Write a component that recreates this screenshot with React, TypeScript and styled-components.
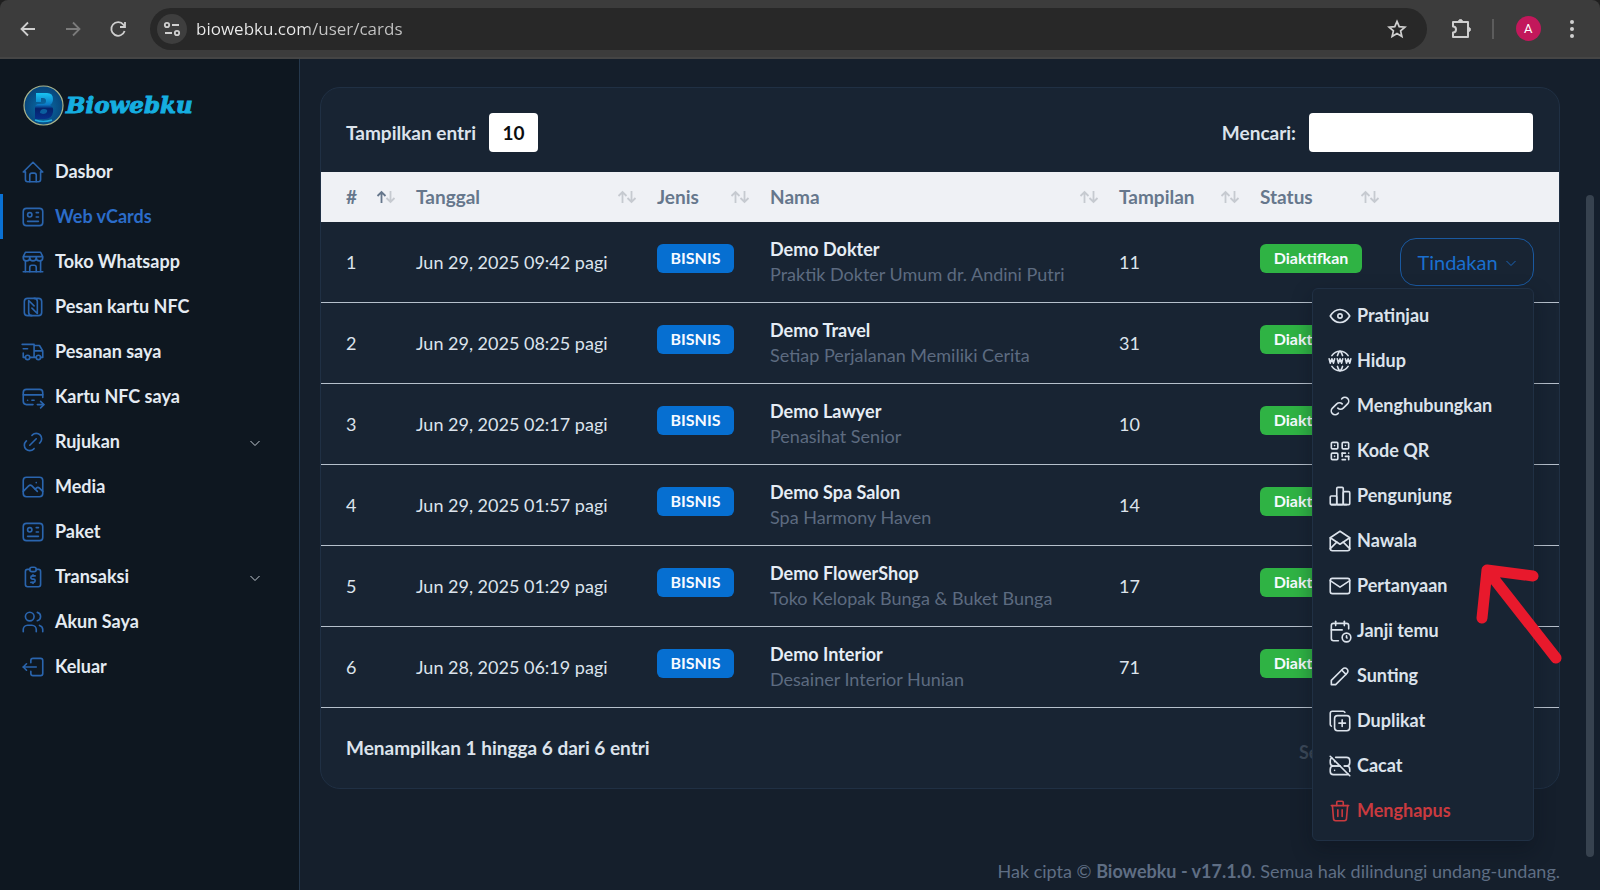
import React from "react";
import styled, { createGlobalStyle, css } from "styled-components";
import {
  TbHome, TbId, TbBuildingStore, TbNfc, TbTruckDelivery, TbCreditCardPay, TbPhoto, TbReportMoney,
  TbUsers, TbLogout2, TbEye, TbWorldWww, TbQrcode, TbChartBar, TbMailOpened, TbMail, TbCalendarClock,
  TbPencil, TbCopyPlus, TbServerOff, TbTrash,
} from "react-icons/tb";

const font = `Lato, "Open Sans", sans-serif`;

const Global = createGlobalStyle`
  *, *::before, *::after { box-sizing: border-box; }
  body { margin: 0; background: #151f2c; font-family: ${font}; font-size: 18px; line-height: 24px; color: #dce3ec; }
  button, input, select { font: inherit; color: inherit; border: 0; padding: 0; margin: 0; background: none; }
  button { cursor: pointer; }
  a { color: inherit; text-decoration: none; }
`;

const Window = styled.div`
  display: flex;
  flex-direction: column;
  min-height: 100vh;
  background: #1f1f1f;
`;

/* Browser toolbar */
const Toolbar = styled.header`
  display: flex;
  align-items: center;
  height: 59px;
  padding: 0 16px;
  background: #3c3c3c;
  border-bottom: 2px solid #454545;
  border-radius: 8px 8px 0 0;
`;
const ToolButton = styled.button<{ $dim?: boolean }>`
  display: flex;
  align-items: center;
  justify-content: center;
  width: 24px;
  height: 24px;
  color: ${(p) => (p.$dim ? "#7b7b7b" : "#cfcfcf")};
`;
const NavButtons = styled.div`
  display: flex;
  gap: 21px;
  width: 134px;
`;
const Omnibox = styled.div`
  display: flex;
  align-items: center;
  flex: 1;
  gap: 9px;
  height: 42px;
  padding: 0 18px 0 7px;
  border-radius: 21px;
  background: #282828;
`;
const SiteInfo = styled(ToolButton)`
  width: 30px;
  height: 30px;
  border-radius: 50%;
  background: #3e3e3e;
`;
const Address = styled.input`
  flex: 1;
  min-width: 0;
  height: 30px;
  font-family: "Open Sans", "Noto Sans", sans-serif;
  font-size: 17px;
  outline: none;
  background: linear-gradient(90deg, #ececec 112px, #c6c6c6 112px);
  background-clip: text;
  -webkit-background-clip: text;
  color: transparent;
`;
const ToolbarEnd = styled.div`
  display: flex;
  align-items: center;
  justify-content: space-between;
  width: 135px;
  margin-left: 22px;
`;
const ToolDivider = styled.span`
  width: 2px;
  height: 20px;
  margin: 0 8px 0 6px;
  background: #5c5c5c;
`;
const Avatar = styled.button`
  width: 25px;
  height: 25px;
  margin-right: 6px;
  border-radius: 50%;
  background: #c2185b;
  color: #fff;
  font-family: Roboto, sans-serif;
  font-size: 13px;
  line-height: 25px;
`;

/* Page */
const Page = styled.div`
  display: flex;
  flex: 1;
  background: #151f2c;
`;
const Sidebar = styled.aside`
  flex: 0 0 300px;
  background: #0e1720;
  border-right: 1px solid #25384c;
`;
const Brand = styled.a`
  display: flex;
  align-items: center;
  gap: 2px;
  height: 90px;
  padding: 2px 0 0 23px;
  font-family: "DejaVu Serif", serif;
  font-size: 23px;
  font-weight: 700;
  font-style: italic;
  color: #15aee0;
  -webkit-text-stroke: 1px #15aee0;
`;
const NavLink = styled.a<{ $active?: boolean }>`
  display: flex;
  align-items: center;
  gap: 9px;
  height: 45px;
  padding: 0 38px 0 17px;
  border-left: 3px solid ${(p) => (p.$active ? "#0a71d3" : "transparent")};
  font-weight: 700;
  color: ${(p) => (p.$active ? "#2b6cc9" : "#e4ebf2")};
  > svg:first-child { color: #2a65ae; }
`;
const ItemLabel = styled.span`
  flex: 1;
  padding-bottom: 2px;
`;
const iconCss = css`
  svg.tb { width: 26px; height: 26px; flex: none; stroke-width: 1.5px; }
`;
const Nav = styled.nav`
  display: flex;
  flex-direction: column;
  ${iconCss}
`;

const Main = styled.main`
  display: flex;
  flex: 1;
  flex-direction: column;
  min-width: 0;
  padding: 28px 26px 7px 20px;
`;
const ScrollRail = styled.div`
  display: flex;
  width: 14px;
  padding: 136px 6px 33px 0;
`;
const ScrollThumb = styled.div`
  flex: 1;
  border-radius: 4px;
  background: #37424f;
`;
const Card = styled.section`
  border: 1px solid #203044;
  border-radius: 20px;
  background: #182433;
`;
const CardBar = styled.div`
  display: flex;
  align-items: center;
  justify-content: space-between;
  height: 84px;
  padding: 5px 26px 0 25px;
  font-size: 19px;
`;
const Field = styled.label`
  display: flex;
  align-items: center;
  gap: 13px;
  font-weight: 700;
`;
const LengthSelect = styled.select`
  appearance: none;
  width: 49px;
  height: 39px;
  border-radius: 4px;
  background: #fff;
  color: #0b0d10;
  text-align-last: center;
`;
const SearchInput = styled.input`
  width: 224px;
  height: 39px;
  padding: 0 12px;
  border-radius: 4px;
  background: #fff;
  color: #0b0d10;
`;

const Table = styled.table`
  width: 100%;
  table-layout: fixed;
  border-collapse: separate;
  border-spacing: 0;
`;
const HeadCell = styled.th<{ $w?: number }>`
  width: ${(p) => (p.$w ? `${p.$w}px` : "auto")};
  height: 50px;
  padding: 0 8px 0 12px;
  background: #eff1f5;
  color: #66778c;
  text-align: left;
  font-size: 19px;
  font-weight: 700;
  &:first-child { padding-left: 25px; }
`;
const SortButton = styled.button`
  display: flex;
  align-items: center;
  justify-content: space-between;
  width: 100%;
`;
const Cell = styled.td`
  height: 81px;
  padding: 0 12px 1px;
  border-bottom: 1px solid #b6c0cc;
  white-space: nowrap;
  &:first-child { padding-left: 25px; }
  &:last-child { padding-right: 25px; }
`;
const BadgeCell = styled(Cell)`
  padding-bottom: 8px;
`;
const Badge = styled.span<{ $green?: boolean }>`
  display: flex;
  align-items: center;
  justify-content: center;
  width: ${(p) => (p.$green ? "102px" : "77px")};
  height: 29px;
  border-radius: 6px;
  background: ${(p) => (p.$green ? "#2fb344" : "#066fd1")};
  color: #f6faff;
  font-size: 16px;
  font-weight: 700;
`;
const CardName = styled.div`
  font-weight: 700;
  line-height: 25px;
  color: #e6edf5;
`;
const CardTitle = styled.div`
  line-height: 25px;
  color: #5d6b80;
`;
const ActionWrap = styled.div`
  position: relative;
  display: flex;
  justify-content: flex-end;
`;
const ActionButton = styled.button`
  display: flex;
  align-items: center;
  justify-content: center;
  gap: 7px;
  width: 134px;
  height: 48px;
  border: 1px solid #1a59a0;
  border-radius: 16px;
  font-size: 20px;
  color: #1a6fce;
`;
const Menu = styled.div`
  position: absolute;
  z-index: 2;
  top: 50px;
  right: 0;
  width: 222px;
  padding: 5px 0 6px;
  border: 1px solid #203044;
  border-radius: 6px;
  background: #182433;
  box-shadow: 0 8px 20px rgba(8, 14, 22, 0.35);
  ${iconCss}
`;
const MenuItem = styled.a<{ $danger?: boolean }>`
  display: flex;
  align-items: center;
  gap: 4px;
  height: 45px;
  padding-left: 14px;
  font-weight: 700;
  color: ${(p) => (p.$danger ? "#c93a3f" : "#dce3ec")};
`;
const Pointer = styled.svg`
  position: absolute;
  top: 271px;
  left: 160px;
  width: 96px;
  height: 112px;
  pointer-events: none;
`;
const CardFooter = styled(CardBar)`
  height: 80px;
  padding: 0 25px;
  font-weight: 700;
`;
const Pager = styled.nav`
  display: flex;
  justify-content: space-between;
  width: 235px;
  padding-top: 8px;
  font-size: 18px;
  color: #3c4959;
`;
const PageFooter = styled.footer`
  margin-top: auto;
  text-align: right;
  color: #5f6e84;
`;

const LinkIcon = () => (
  <svg className="tb" viewBox="0 0 24 24" fill="none" stroke="currentColor" strokeLinecap="round" strokeLinejoin="round">
    <path d="M9 15l6 -6M11 6l.463 -.536a5 5 0 0 1 7.071 7.072l-.534 .464M13 18l-.397 .534a5.068 5.068 0 0 1 -7.127 0a4.972 4.972 0 0 1 0 -7.071l.524 -.463" />
  </svg>
);
const ChainIcon = () => (
  <svg className="tb" viewBox="0 0 24 24" fill="none" stroke="currentColor" strokeLinecap="round" strokeLinejoin="round">
    <path d="M10 14a3.5 3.5 0 0 0 5 0l4 -4a3.5 3.5 0 0 0 -5 -5l-.5 .5M14 10a3.5 3.5 0 0 0 -5 0l-4 4a3.5 3.5 0 0 0 5 5l.5 -.5" />
  </svg>
);
const Chevron = () => (
  <svg width="12" height="12" viewBox="0 0 12 12" fill="none" stroke="currentColor" strokeWidth="1" opacity="0.85">
    <path d="M1.5 5l4.500 4.500l4.500 -4.500" />
  </svg>
);
const SortIcon = ({ up }: { up?: boolean }) => (
  <svg width="20" height="14" viewBox="0 0 20 14" fill="none" strokeWidth="1.8">
    <path d="M5.5 13V2M1.5 6l4 -4l4 4" stroke={up ? "#66778c" : "#c6cad0"} />
    <path d="M14.5 1v11M10.5 8l4 4l4 -4" stroke="#c6cad0" />
  </svg>
);
const Logo = () => (
  <svg width="41" height="41" viewBox="0 0 41 41">
    <defs>
      <radialGradient id="disc" cx="50%" cy="55%" r="50%">
        <stop offset="0" stopColor="#0a6ea8" />
        <stop offset="1" stopColor="#07467c" />
      </radialGradient>
      <linearGradient id="mark" x1="0" y1="0" x2="0" y2="1">
        <stop offset="0" stopColor="#19c4f2" />
        <stop offset="0.45" stopColor="#0b78c4" />
        <stop offset="0.6" stopColor="#06226b" />
        <stop offset="1" stopColor="#07308a" />
      </linearGradient>
    </defs>
    <circle cx="20.500" cy="20.500" r="19.500" fill="url(#disc)" stroke="#a9b48c" strokeWidth="1.2" />
    <path d="M13 8h11q6 0 6 6q0 4-3 6q4 2 3 7q-1 7-8 7H12V23q0-4 4-4h4q3 0 3-3t-3-3h-2v4h-5z" fill="url(#mark)" />
    <path d="M17 28q0-4 4-4t3 3q-1 2-4 2z" fill="#0b5f9f" />
    <path d="M12 35q8 3 17 0" stroke="#1fa8dd" strokeWidth="1.500" fill="none" />
  </svg>
);

const navItems = [
  { label: "Dasbor", icon: <TbHome className="tb" /> },
  { label: "Web vCards", icon: <TbId className="tb" />, active: true },
  { label: "Toko Whatsapp", icon: <TbBuildingStore className="tb" /> },
  { label: "Pesan kartu NFC", icon: <TbNfc className="tb" /> },
  { label: "Pesanan saya", icon: <TbTruckDelivery className="tb" /> },
  { label: "Kartu NFC saya", icon: <TbCreditCardPay className="tb" /> },
  { label: "Rujukan", icon: <LinkIcon />, expandable: true },
  { label: "Media", icon: <TbPhoto className="tb" /> },
  { label: "Paket", icon: <TbId className="tb" /> },
  { label: "Transaksi", icon: <TbReportMoney className="tb" />, expandable: true },
  { label: "Akun Saya", icon: <TbUsers className="tb" /> },
  { label: "Keluar", icon: <TbLogout2 className="tb" /> },
];

const menuItems = [
  { label: "Pratinjau", icon: <TbEye className="tb" /> },
  { label: "Hidup", icon: <TbWorldWww className="tb" /> },
  { label: "Menghubungkan", icon: <ChainIcon /> },
  { label: "Kode QR", icon: <TbQrcode className="tb" /> },
  { label: "Pengunjung", icon: <TbChartBar className="tb" /> },
  { label: "Nawala", icon: <TbMailOpened className="tb" /> },
  { label: "Pertanyaan", icon: <TbMail className="tb" /> },
  { label: "Janji temu", icon: <TbCalendarClock className="tb" /> },
  { label: "Sunting", icon: <TbPencil className="tb" /> },
  { label: "Duplikat", icon: <TbCopyPlus className="tb" /> },
  { label: "Cacat", icon: <TbServerOff className="tb" /> },
  { label: "Menghapus", icon: <TbTrash className="tb" />, danger: true },
];

const columns = [
  { label: "#", width: 83, up: true },
  { label: "Tanggal", width: 241 },
  { label: "Jenis", width: 113 },
  { label: "Nama" },
  { label: "Tampilan", width: 141 },
  { label: "Status", width: 140 },
];

const rows = [
  { date: "Jun 29, 2025 09:42 pagi", name: "Demo Dokter", title: "Praktik Dokter Umum dr. Andini Putri", views: 11 },
  { date: "Jun 29, 2025 08:25 pagi", name: "Demo Travel", title: "Setiap Perjalanan Memiliki Cerita", views: 31 },
  { date: "Jun 29, 2025 02:17 pagi", name: "Demo Lawyer", title: "Penasihat Senior", views: 10 },
  { date: "Jun 29, 2025 01:57 pagi", name: "Demo Spa Salon", title: "Spa Harmony Haven", views: 14 },
  { date: "Jun 29, 2025 01:29 pagi", name: "Demo FlowerShop", title: "Toko Kelopak Bunga & Buket Bunga", views: 17 },
  { date: "Jun 28, 2025 06:19 pagi", name: "Demo Interior", title: "Desainer Interior Hunian", views: 71 },
];

function BrowserToolbar() {
  return (
    <Toolbar>
      <NavButtons>
        <ToolButton aria-label="Kembali">
          <svg width="18" height="18" viewBox="0 0 18 18" fill="none" stroke="currentColor" strokeWidth="1.800"><path d="M16 9H3M9 2.500L2.500 9l6.500 6.500" /></svg>
        </ToolButton>
        <ToolButton $dim aria-label="Maju">
          <svg width="18" height="18" viewBox="0 0 18 18" fill="none" stroke="currentColor" strokeWidth="1.800"><path d="M2 9h13M9 2.500l6.500 6.500l-6.500 6.500" /></svg>
        </ToolButton>
        <ToolButton aria-label="Muat ulang">
          <svg width="18" height="18" viewBox="0 0 18 18" fill="none" stroke="currentColor" strokeWidth="1.800"><path d="M15.600 11A6.800 6.800 0 1 1 14.500 4.800L16 6.500M16 2v5h-5" /></svg>
        </ToolButton>
      </NavButtons>
      <Omnibox>
        <SiteInfo aria-label="Info situs">
          <svg width="18" height="16" viewBox="0 0 18 16" fill="none" stroke="currentColor" strokeWidth="1.800"><circle cx="4" cy="4" r="2.200" /><path d="M9 4h7M2 12h7" /><circle cx="14" cy="12" r="2.200" /></svg>
        </SiteInfo>
        <Address aria-label="Alamat" defaultValue="biowebku.com/user/cards" />
        <ToolButton aria-label="Tandai">
          <svg width="20" height="20" viewBox="0 0 20 20" fill="none" stroke="currentColor" strokeWidth="1.700"><path d="M10 2.400l2.200 5.300l5.700 .5l-4.300 3.700l1.300 5.600l-4.900 -3l-4.900 3l1.300 -5.600l-4.300 -3.700l5.700 -.5z" /></svg>
        </ToolButton>
      </Omnibox>
      <ToolbarEnd>
        <ToolButton aria-label="Ekstensi">
          <svg width="22" height="22" viewBox="0 0 22 22" fill="none" stroke="currentColor" strokeWidth="2"><path d="M3 4h15v15H3v-4.500a3 3 0 0 0 0 -6z" strokeLinejoin="round" /><path d="M8.500 3.500a2 2 0 0 1 4 0zM18.500 9.500a2 2 0 0 1 0 4z" fill="currentColor" strokeWidth="1" /></svg>
        </ToolButton>
        <ToolDivider />
        <Avatar>A</Avatar>
        <ToolButton aria-label="Menu">
          <svg width="4" height="18" viewBox="0 0 4 18" fill="currentColor"><circle cx="2" cy="2" r="2" /><circle cx="2" cy="9" r="2" /><circle cx="2" cy="16" r="2" /></svg>
        </ToolButton>
      </ToolbarEnd>
    </Toolbar>
  );
}

function ActionMenu() {
  return (
    <Menu>
      {menuItems.map((m) => (
        <MenuItem key={m.label} href="#" $danger={m.danger}>{m.icon}<ItemLabel>{m.label}</ItemLabel></MenuItem>
      ))}
      <Pointer viewBox="0 0 96 112" fill="none" stroke="#e8192c" strokeWidth="11" strokeLinecap="round" strokeLinejoin="round">
        <path d="M60 16L14 10L9 58M14 10L83 98" />
      </Pointer>
    </Menu>
  );
}

export default function App() {
  return (
    <Window>
      <Global />
      <BrowserToolbar />
      <Page>
        <Sidebar>
          <Brand href="#"><Logo />Biowebku</Brand>
          <Nav>
            {navItems.map((n) => (
              <NavLink key={n.label} href="#" $active={n.active}>
                {n.icon}
                <ItemLabel>{n.label}</ItemLabel>
                {n.expandable && <Chevron />}
              </NavLink>
            ))}
          </Nav>
        </Sidebar>
        <Main>
          <Card>
            <CardBar>
              <Field>Tampilkan entri<LengthSelect defaultValue="10"><option>10</option></LengthSelect></Field>
              <Field>Mencari:<SearchInput type="search" /></Field>
            </CardBar>
            <Table>
              <thead>
                <tr>
                  {columns.map((c) => (
                    <HeadCell key={c.label} $w={c.width}>
                      <SortButton>{c.label}<SortIcon up={c.up} /></SortButton>
                    </HeadCell>
                  ))}
                  <HeadCell $w={171} />
                </tr>
              </thead>
              <tbody>
                {rows.map((r, i) => (
                  <tr key={r.date}>
                    <Cell>{i + 1}</Cell>
                    <Cell>{r.date}</Cell>
                    <BadgeCell><Badge>BISNIS</Badge></BadgeCell>
                    <Cell><CardName>{r.name}</CardName><CardTitle>{r.title}</CardTitle></Cell>
                    <Cell>{r.views}</Cell>
                    <BadgeCell><Badge $green>Diaktifkan</Badge></BadgeCell>
                    <Cell>
                      <ActionWrap>
                        <ActionButton>Tindakan<Chevron /></ActionButton>
                        {i === 0 && <ActionMenu />}
                      </ActionWrap>
                    </Cell>
                  </tr>
                ))}
              </tbody>
            </Table>
            <CardFooter>
              <span>Menampilkan 1 hingga 6 dari 6 entri</span>
              <Pager><span>Sebelumnya</span><span>1</span><span>Berikutnya</span></Pager>
            </CardFooter>
          </Card>
          <PageFooter>Hak cipta © <b>Biowebku - v17.1.0</b>. Semua hak dilindungi undang-undang.</PageFooter>
        </Main>
        <ScrollRail><ScrollThumb /></ScrollRail>
      </Page>
    </Window>
  );
}
